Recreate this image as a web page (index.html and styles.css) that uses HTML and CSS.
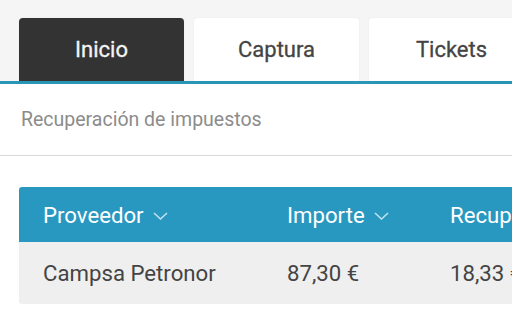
FILE: index.html
```html
<!DOCTYPE html>
<html lang="es">
<head>
<meta charset="utf-8">
<link rel="stylesheet" href="styles.css">
</head>
<body>
<div class="page">
  <nav class="tabs">
    <div class="tab active">Inicio</div>
    <div class="tab">Captura</div>
    <div class="tab">Tickets</div>
  </nav>
  <div class="subtitle">Recuperación de impuestos</div>
  <div class="table-wrap">
    <div class="table">
      <div class="cell head">Proveedor <svg class="chev" viewBox="0 0 15 8"><path d="M1 1 L7.5 7 L14 1" /></svg></div>
      <div class="cell head">Importe <svg class="chev" viewBox="0 0 15 8"><path d="M1 1 L7.5 7 L14 1" /></svg></div>
      <div class="cell head">Recuperado <svg class="chev" viewBox="0 0 15 8"><path d="M1 1 L7.5 7 L14 1" /></svg></div>
      <div class="cell row first">Campsa Petronor</div>
      <div class="cell row">87,30 €</div>
      <div class="cell row">18,33 €</div>
    </div>
  </div>
</div>
</body>
</html>
```
FILE: styles.css
```css
html, body {
  margin: 0;
  padding: 0;
  background: #ffffff;
  overflow: hidden;
}
.page {
  width: 512px;
  height: 324px;
  overflow: hidden;
  font-family: Roboto, "Liberation Sans", sans-serif;
}
.tabs {
  display: flex;
  gap: 10px;
  padding: 18px 0 0 19px;
  background: #f5f5f5;
  border-bottom: 3px solid #2a95b5;
  width: 700px;
}
.tab {
  flex: 0 0 165px;
  height: 63px;
  display: flex;
  align-items: center;
  justify-content: center;
  background: #ffffff;
  border-radius: 4px 4px 0 0;
  box-shadow: 0 0 2px rgba(0, 0, 0, 0.06);
  color: #444444;
  font-size: 22px;
  font-weight: 400;
  -webkit-text-stroke: 0.3px currentColor;
}
.tab.active {
  background: #333333;
  color: #f4f4f4;
}
.subtitle {
  height: 71px;
  display: flex;
  align-items: center;
  padding-left: 21px;
  border-bottom: 1px solid #d9d9d9;
  color: #8c8c8c;
  font-size: 19.5px;
}
.table-wrap {
  padding: 31px 0 0 19px;
}
.table {
  display: grid;
  grid-template-columns: 244px 163px 200px;
  width: 607px;
}
.cell {
  display: flex;
  align-items: center;
  padding-left: 24px;
  white-space: nowrap;
  font-size: 22.2px;
}
.head {
  height: 55px;
  background: #2898c1;
  color: #ffffff;
}
.head:first-child {
  border-top-left-radius: 3px;
}
.row {
  height: 62px;
  background: #efefef;
  color: #444444;
}
.row.first {
  border-bottom-left-radius: 3px;
}
.chev {
  width: 15px;
  height: 8px;
  margin-left: 9px;
  margin-top: 2px;
  fill: none;
  stroke: rgba(255, 255, 255, 0.7);
  stroke-width: 1.6;
}
```
